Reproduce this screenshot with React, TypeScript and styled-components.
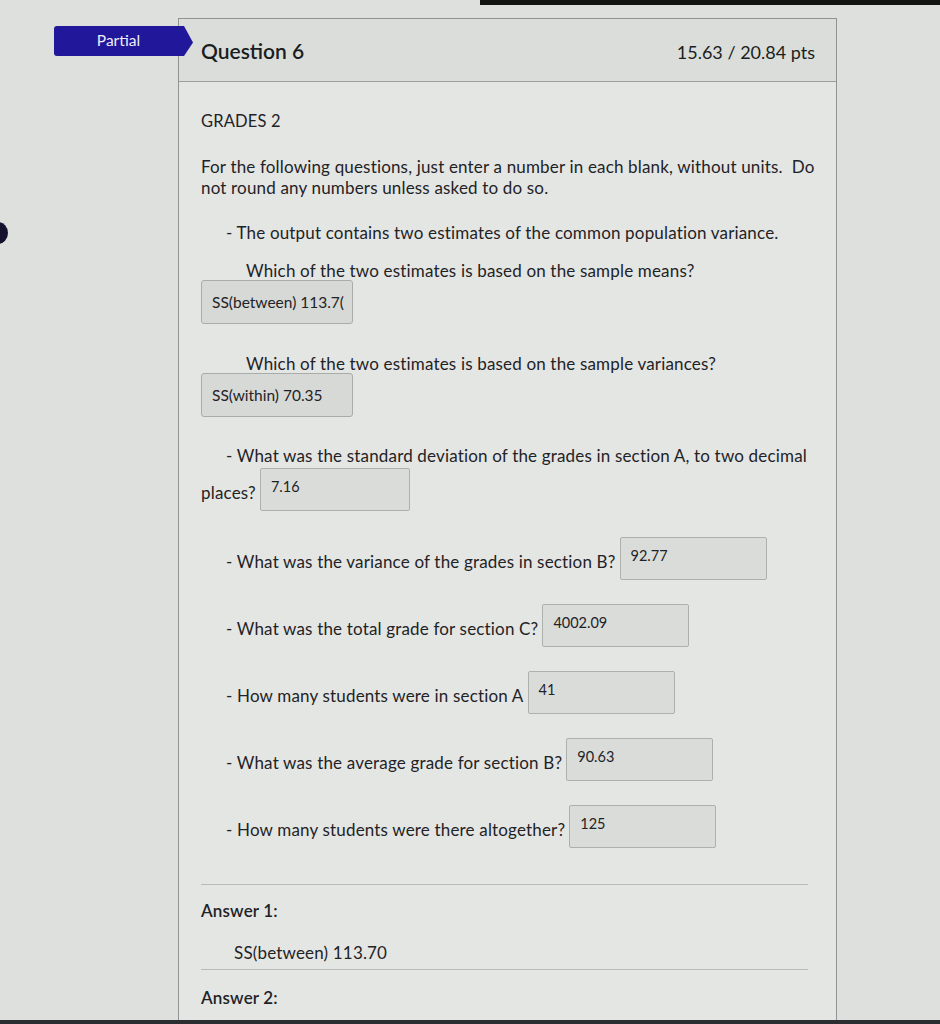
import styled, { createGlobalStyle } from "styled-components";

const GlobalStyle = createGlobalStyle`
  html, body {
    margin: 0;
    padding: 0;
    background: #dde0dd;
  }
  body {
    font-family: Lato, "Open Sans", "Liberation Sans", sans-serif;
    color: #1f2326;
  }
`;

type Blank = { label: string; value: string };

const blanks: Blank[] = [
  { label: "- What was the variance of the grades in section B?", value: "92.77" },
  { label: "- What was the total grade for section C?", value: "4002.09" },
  { label: "- How many students were in section A", value: "41" },
  { label: "- What was the average grade for section B?", value: "90.63" },
  { label: "- How many students were there altogether?", value: "125" },
];

export default function App() {
  return (
    <Page>
      <GlobalStyle />
      <ScreenEdge />
      <Blob />
      <Badge>Partial</Badge>
      <Card>
        <Header>
          <Title>Question 6</Title>
          <Points>15.63 / 20.84 pts</Points>
        </Header>
        <Body>
          <Heading>GRADES 2</Heading>
          <Intro>
            For the following questions, just enter a number in each blank, without units.&nbsp; Do
            not round any numbers unless asked to do so.
          </Intro>
          <Bullet>- The output contains two estimates of the common population variance.</Bullet>
          <SubQuestion>Which of the two estimates is based on the sample means?</SubQuestion>
          <AnswerBox>SS(between) 113.7(</AnswerBox>
          <SubQuestion $top={29}>Which of the two estimates is based on the sample variances?</SubQuestion>
          <AnswerBox>SS(within) 70.35</AnswerBox>
          <Bullet $top={28}>- What was the standard deviation of the grades in section A, to two decimal</Bullet>
          <InlineRow $top={1}>
            <PlainLabel>places?</PlainLabel>
            <BlankBox $width={150}>7.16</BlankBox>
          </InlineRow>
          {blanks.map((b, i) => (
            <InlineRow key={b.label} $top={i === 0 ? 26 : 24}>
              <IndentLabel>{b.label}</IndentLabel>
              <BlankBox>{b.value}</BlankBox>
            </InlineRow>
          ))}
          <Divider $top={36} />
          <AnswerTitle>Answer 1:</AnswerTitle>
          <AnswerValue>SS(between) 113.70</AnswerValue>
          <Divider $top={5} />
          <AnswerTitle $top={17}>Answer 2:</AnswerTitle>
        </Body>
      </Card>
      <BottomEdge />
    </Page>
  );
}

const Page = styled.div`
  position: relative;
  width: 940px;
  height: 1024px;
  overflow: hidden;
  padding-top: 18px;
  box-sizing: border-box;
`;

const ScreenEdge = styled.div`
  position: absolute;
  top: 0;
  left: 480px;
  right: 0;
  height: 5px;
  background: #141414;
`;

const BottomEdge = styled.div`
  position: absolute;
  left: 0;
  right: 0;
  bottom: 0;
  height: 4px;
  background: #2a2e30;
`;

const Blob = styled.div`
  position: absolute;
  top: 222px;
  left: -12px;
  width: 20px;
  height: 22px;
  border-radius: 50%;
  background: #14102e;
`;

const Badge = styled.div`
  position: absolute;
  top: 26px;
  left: 54px;
  width: 139px;
  height: 30px;
  padding-right: 10px;
  box-sizing: border-box;
  background: #21179a;
  color: #eeeef6;
  font-size: 15.5px;
  line-height: 28px;
  text-align: center;
  border-radius: 3px 0 0 3px;
  clip-path: polygon(0 0, 130px 0, 139px 55%, 130px 100%, 0 100%);
  z-index: 2;
`;

const Card = styled.div`
  margin-left: 178px;
  width: 659px;
  height: 1010px;
  border: 1px solid #8f9391;
  border-bottom: none;
  background: #e4e6e4;
  box-sizing: border-box;
`;

const Header = styled.div`
  display: flex;
  align-items: center;
  justify-content: space-between;
  height: 63px;
  padding: 0 21px 0 22px;
  background: #dadddA;
  border-bottom: 1px solid #9a9e9c;
  box-sizing: border-box;
`;

const Title = styled.h2`
  margin: 0;
  font-size: 21px;
  font-weight: 600;
  color: #1b1e20;
`;

const Points = styled.span`
  margin-top: 4px;
  font-size: 18px;
  color: #1b1e20;
`;

const Body = styled.div`
  padding: 28px 24px 0 22px;
  letter-spacing: 0.17px;
`;

const Heading = styled.div`
  font-size: 16.5px;
  line-height: 22px;
`;

const Intro = styled.p`
  margin: 24px -14px 0 0;
  font-size: 17px;
  line-height: 21px;
`;

const Bullet = styled.p<{ $top?: number }>`
  margin: ${(p) => p.$top ?? 24}px 0 0 25px;
  font-size: 17px;
  line-height: 22px;
`;

const SubQuestion = styled.p<{ $top?: number }>`
  margin: ${(p) => p.$top ?? 16}px 0 0 45px;
  font-size: 17px;
  line-height: 22px;
`;

const AnswerBox = styled.div`
  width: 152px;
  height: 44px;
  margin-top: -2px;
  padding: 0 10px;
  box-sizing: border-box;
  display: flex;
  align-items: center;
  background: #d6d9d6;
  border: 1px solid #a9adaa;
  border-radius: 3px;
  font-size: 15.5px;
  letter-spacing: 0;
  white-space: nowrap;
  overflow: hidden;
`;

const InlineRow = styled.div<{ $top?: number }>`
  display: flex;
  align-items: center;
  margin-top: ${(p) => p.$top ?? 0}px;
`;

const PlainLabel = styled.span`
  font-size: 17px;
  line-height: 22px;
  margin-top: 6px;
  margin-right: 4px;
`;

const IndentLabel = styled(PlainLabel)`
  margin-left: 25px;
`;

const BlankBox = styled.div<{ $width?: number }>`
  width: ${(p) => p.$width ?? 147}px;
  height: 43px;
  padding: 9px 10px 0;
  box-sizing: border-box;
  background: #d9dcd9;
  border: 1px solid #adb1ae;
  border-radius: 2px;
  font-size: 14.5px;
  line-height: 18px;
  letter-spacing: 0;
`;

const Divider = styled.hr<{ $top?: number }>`
  margin: ${(p) => p.$top ?? 0}px 4px 0 0;
  border: none;
  border-top: 1px solid #b8bcb9;
`;

const AnswerTitle = styled.div<{ $top?: number }>`
  margin-top: ${(p) => p.$top ?? 15}px;
  font-size: 17px;
  font-weight: 600;
  line-height: 22px;
`;

const AnswerValue = styled.div`
  margin: 20px 0 0 33px;
  font-size: 17px;
  line-height: 22px;
`;
